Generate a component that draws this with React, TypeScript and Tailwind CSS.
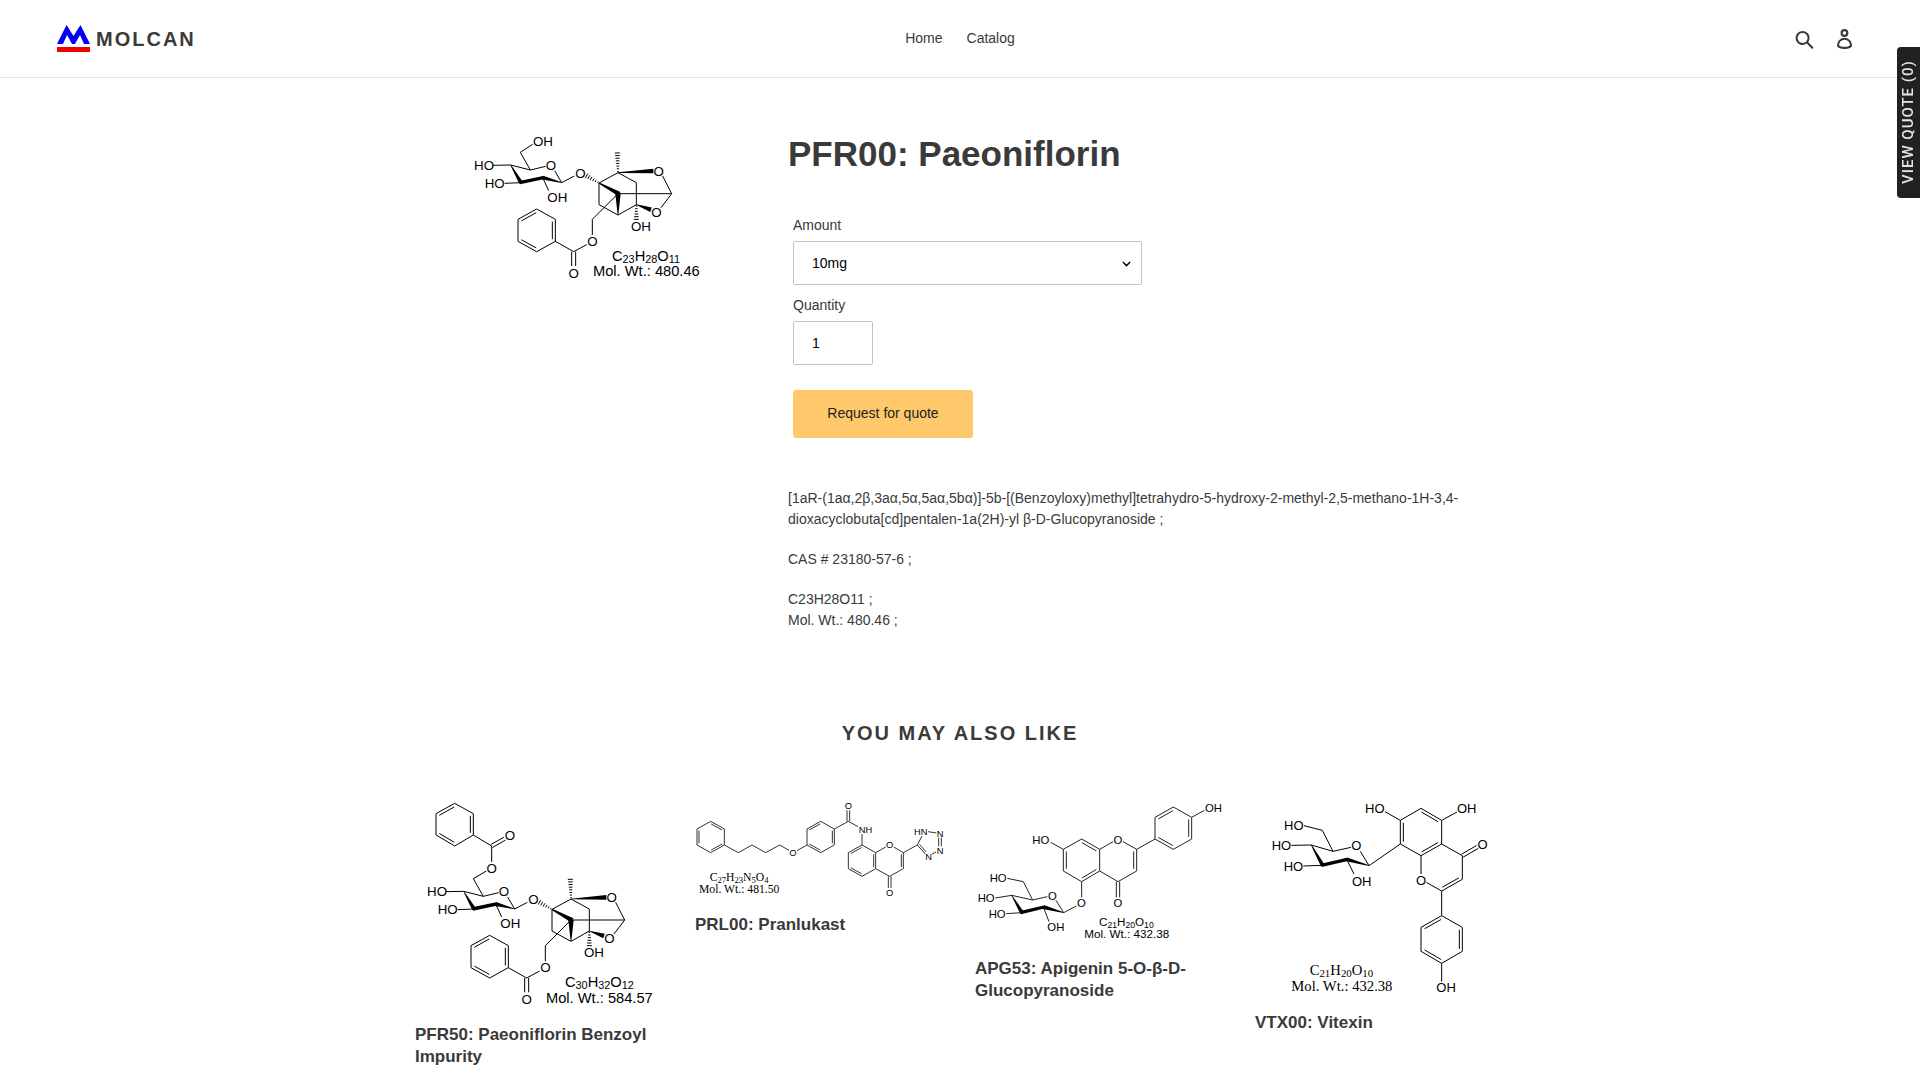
import React from "react";

type Pt = [number, number];
type LabelData = [x: number, y: number, text: string, centered?: boolean];

const points = (list: Pt[]) => list.map((p) => p.join(",")).join(" ");

/** Closed ring with inner double-bond strokes on the chosen edges. */
function Ring({ at, doubles, gap = 9 }: { at: Pt[]; doubles: number[]; gap?: number }) {
  const cx = at.reduce((s, p) => s + p[0], 0) / at.length;
  const cy = at.reduce((s, p) => s + p[1], 0) / at.length;
  return (
    <>
      <polygon points={points(at)} />
      {doubles.map((i) => (
        <InnerBond key={i} a={at[i]} b={at[(i + 1) % at.length]} to={[cx, cy]} gap={gap} />
      ))}
    </>
  );
}

/** Second stroke of a double bond, shifted towards the point `to`. */
function InnerBond({ a, b, to, gap = 9 }: { a: Pt; b: Pt; to: Pt; gap?: number }) {
  const dx = b[0] - a[0];
  const dy = b[1] - a[1];
  const len = Math.hypot(dx, dy);
  let nx = -dy / len;
  let ny = dx / len;
  if (nx * (to[0] - a[0]) + ny * (to[1] - a[1]) < 0) {
    nx = -nx;
    ny = -ny;
  }
  return (
    <line
      x1={a[0] + dx * 0.1 + nx * gap}
      y1={a[1] + dy * 0.1 + ny * gap}
      x2={b[0] - dx * 0.1 + nx * gap}
      y2={b[1] - dy * 0.1 + ny * gap}
    />
  );
}

/** Two parallel strokes either side of the axis a-b. */
function Double({ a, b, gap = 5 }: { a: Pt; b: Pt; gap?: number }) {
  const len = Math.hypot(b[0] - a[0], b[1] - a[1]);
  const nx = (-(b[1] - a[1]) / len) * gap;
  const ny = ((b[0] - a[0]) / len) * gap;
  return (
    <path
      d={`M${a[0] + nx},${a[1] + ny}L${b[0] + nx},${b[1] + ny}M${a[0] - nx},${a[1] - ny}L${b[0] - nx},${b[1] - ny}`}
    />
  );
}

/** Solid wedge from the narrow end a to the wide end b. */
function Wedge({ a, b, from = 1, to = 6 }: { a: Pt; b: Pt; from?: number; to?: number }) {
  const len = Math.hypot(b[0] - a[0], b[1] - a[1]);
  const nx = -(b[1] - a[1]) / len;
  const ny = (b[0] - a[0]) / len;
  return (
    <polygon
      fill="#000"
      stroke="none"
      points={points([
        [a[0] + nx * from, a[1] + ny * from],
        [b[0] + nx * to, b[1] + ny * to],
        [b[0] - nx * to, b[1] - ny * to],
        [a[0] - nx * from, a[1] - ny * from],
      ])}
    />
  );
}

/** Hashed wedge from the narrow end a to the wide end b. */
function Hash({ a, b, n = 7 }: { a: Pt; b: Pt; n?: number }) {
  const len = Math.hypot(b[0] - a[0], b[1] - a[1]);
  const nx = -(b[1] - a[1]) / len;
  const ny = (b[0] - a[0]) / len;
  const d = Array.from({ length: n }, (_, i) => {
    const t = (i + 0.5) / n;
    const w = 2 + 6 * t;
    const x = a[0] + (b[0] - a[0]) * t;
    const y = a[1] + (b[1] - a[1]) * t;
    return `M${x + nx * w},${y + ny * w}L${x - nx * w},${y - ny * w}`;
  }).join("");
  return <path d={d} />;
}

function Labels({ items, size }: { items: LabelData[]; size: number }) {
  return (
    <g fill="#000" stroke="none" fontSize={size} fontFamily='"Liberation Sans", sans-serif'>
      {items.map(([x, y, text, centered], i) => (
        <text key={i} x={x} y={y} textAnchor={centered ? "middle" : "start"}>
          {text}
        </text>
      ))}
    </g>
  );
}

function Formula({
  parts,
  weight,
  at,
  weightAt,
  size,
  serif,
}: {
  parts: string[];
  weight: string;
  at: Pt;
  weightAt: Pt;
  size: number;
  serif?: boolean;
}) {
  return (
    <g
      fill="#000"
      stroke="none"
      fontSize={size}
      fontFamily={serif ? '"Liberation Serif", serif' : '"Liberation Sans", sans-serif'}
    >
      <text x={at[0]} y={at[1]}>
        {parts.map((p, i) =>
          /\d/.test(p) ? (
            <tspan key={i} fontSize={size * 0.74} baselineShift="-6">
              {p}
            </tspan>
          ) : (
            <tspan key={i}>{p}</tspan>
          ),
        )}
      </text>
      <text x={weightAt[0]} y={weightAt[1]}>
        Mol. Wt.: {weight}
      </text>
    </g>
  );
}

function Drawing({
  box,
  title,
  className,
  ink = "#000",
  children,
}: {
  box: string;
  title: string;
  className: string;
  ink?: string;
  children: React.ReactNode;
}) {
  return (
    <svg
      viewBox={box}
      role="img"
      aria-label={title}
      className={className}
      fill="none"
      stroke={ink}
      strokeWidth="3"
      strokeLinejoin="round"
    >
      {children}
    </svg>
  );
}

function PaeoniflorinCore() {
  return (
    <>
      <path d="M181,97L211,150M98,136L152,135L211,150L257,139M284,152L305,188L343,168M134,190L182,188M248,173L266,212" />
      <Wedge a={[152, 135]} b={[183, 188]} />
      <Wedge a={[179, 188]} b={[250, 173]} from={5} to={5} />
      <Wedge a={[305, 188]} b={[248, 173]} />
      <Hash a={[417, 189]} b={[376, 166]} n={6} />
      <path d="M417,189L474,158L529,188V254L474,285L417,254V189M474,221H635M608,168L635,221L603,263M474,221L397,298V345M380,374L341,395L286,364" />
      <Hash a={[474, 158]} b={[472, 95]} n={8} />
      <Wedge a={[474, 158]} b={[580, 153]} to={7} />
      <Wedge a={[417, 189]} b={[478, 222]} from={2} to={7} />
      <Wedge a={[474, 285]} b={[474, 221]} to={8} />
      <Wedge a={[529, 254]} b={[573, 269]} to={7} />
      <Hash a={[529, 254]} b={[529, 302]} n={6} />
      <Double a={[341, 395]} b={[341, 438]} gap={6} />
      <Ring at={[[230, 267], [286, 298], [286, 364], [230, 395], [174, 364], [174, 298]]} doubles={[1, 3, 5]} />
      <Labels
        size={40}
        items={[
          [42, 150, "HO"],
          [273, 150, "O", true],
          [74, 204, "HO"],
          [262, 246, "OH"],
          [361, 174, "O", true],
          [596, 167, "O", true],
          [589, 291, "O", true],
          [513, 333, "OH"],
          [397, 378, "O", true],
          [341, 473, "O", true],
        ]}
      />
    </>
  );
}

function Paeoniflorin({ className }: { className: string }) {
  return (
    <Drawing box="-9 0 780 510" title="Structure of Paeoniflorin" className={className}>
      <path d="M218,73L181,97" />
      <PaeoniflorinCore />
      <Labels size={40} items={[[219, 79, "OH"]]} />
      <Formula parts={["C", "23", "H", "28", "O", "11"]} weight="480.46" at={[456, 422]} weightAt={[399, 467]} size={44} />
    </Drawing>
  );
}

function PaeoniflorinBenzoyl() {
  return (
    <Drawing box="15 21 750 639" title="Structure of Paeoniflorin Benzoyl Impurity" className="w-full">
      <g transform="translate(9 169)">
        <PaeoniflorinCore />
      </g>
      <path d="M190,266L229,243M245,216V168L190,135" />
      <Double a={[245, 168]} b={[284, 146]} />
      <Ring at={[[134, 40], [190, 71], [190, 135], [134, 168], [78, 135], [78, 71]]} doubles={[1, 3, 5]} />
      <Labels size={40} items={[[245, 248, "O", true], [300, 151, "O", true]]} />
      <Formula parts={["C", "30", "H", "32", "O", "12"]} weight="584.57" at={[465, 592]} weightAt={[408, 639]} size={44} />
    </Drawing>
  );
}

function Pranlukast() {
  return (
    <Drawing box="30 21 750 309" title="Structure of Pranlukast" className="w-full" ink="#333">
      <Ring at={[[77, 94], [118, 117], [118, 165], [77, 188], [36, 165], [36, 117]]} doubles={[0, 2, 4]} gap={6} />
      <path d="M118,165L160,188L201,165L242,188L284,165L312,181M336,182L366,165M448,117L490,94L519,110M531,132V165" />
      <Ring at={[[366, 165], [366, 117], [407, 94], [448, 117], [448, 165], [407, 188]]} doubles={[1, 3, 5]} gap={6} />
      <Double a={[490, 94]} b={[490, 61]} gap={4} />
      <Ring at={[[531, 165], [572, 188], [572, 236], [531, 259], [490, 236], [490, 188]]} doubles={[1, 3, 5]} gap={6} />
      <path d="M572,188L602,171M626,171L655,188V236L614,259L572,236M655,188L697,165L711,138M729,125L754,129M753,186L741,192M721,192L697,165" />
      <InnerBond a={[655, 188]} b={[655, 236]} to={[614, 212]} gap={6} />
      <InnerBond a={[697, 165]} b={[721, 192]} to={[740, 160]} gap={6} />
      <Double a={[765, 143]} b={[765, 169]} gap={4} />
      <Double a={[614, 259]} b={[614, 294]} gap={4} />
      <Labels
        size={28}
        items={[
          [490, 57, "O", true],
          [324, 199, "O", true],
          [521, 129, "NH"],
          [614, 175, "O", true],
          [614, 319, "O", true],
          [687, 134, "HN"],
          [765, 140, "N", true],
          [765, 192, "N", true],
          [731, 210, "N", true],
        ]}
      />
      <Formula serif parts={["C", "27", "H", "23", "N", "5", "O", "4"]} weight="481.50" at={[74, 274]} weightAt={[42, 308]} size={35} />
    </Drawing>
  );
}

function Apigenin() {
  return (
    <Drawing box="30 21 750 441" title="Structure of Apigenin 5-O-β-D-Glucopyranoside" className="w-full" ink="#222">
      <Ring at={[[625, 51], [680, 82], [680, 147], [625, 178], [570, 147], [570, 82]]} doubles={[1, 3, 5]} />
      <path d="M680,82L718,61M570,147L515,178V243L459,275L404,243M404,178L444,155M474,155L515,178M295,178L257,157M350,275V322M334,348L296,368" />
      <InnerBond a={[515, 178]} b={[515, 243]} to={[459, 210]} />
      <Double a={[459, 275]} b={[459, 322]} />
      <Ring at={[[404, 178], [350, 147], [295, 178], [295, 243], [350, 275], [404, 243]]} doubles={[0, 2, 4]} />
      <path d="M127,265L175,275L203,330M91,324L140,316L203,330L247,320M273,331L296,368M124,371L170,368M235,351L252,395" />
      <Wedge a={[140, 316]} b={[171, 368]} />
      <Wedge a={[167, 368]} b={[237, 351]} from={5} to={5} />
      <Wedge a={[296, 368]} b={[235, 351]} />
      <Labels
        size={34}
        items={[
          [720, 66, "OH"],
          [459, 161, "O", true],
          [459, 352, "O", true],
          [202, 161, "HO"],
          [349, 352, "O", true],
          [74, 276, "HO"],
          [262, 331, "O", true],
          [38, 336, "HO"],
          [71, 383, "HO"],
          [247, 424, "OH"],
        ]}
      />
      <Formula parts={["C", "21", "H", "20", "O", "10"]} weight="432.38" at={[402, 407]} weightAt={[358, 444]} size={35} />
    </Drawing>
  );
}

function Vitexin() {
  return (
    <Drawing box="30 21 750 603" title="Structure of Vitexin" className="w-full">
      <Ring at={[[466, 91], [528, 55], [590, 91], [590, 162], [528, 197], [466, 162]]} doubles={[1, 3, 5]} />
      <path d="M420,65L466,91M590,91L636,66M590,162L652,197V268L590,303L544,277M528,252V197M590,303V377M590,520V575M466,162L372,227" />
      <Double a={[652, 197]} b={[697, 171]} />
      <InnerBond a={[652, 268]} b={[590, 303]} to={[590, 230]} />
      <Ring at={[[590, 377], [652, 412], [652, 484], [590, 520], [528, 484], [528, 412]]} doubles={[1, 3, 5]} />
      <path d="M177,107L232,121L264,184M139,166L199,165L264,184L318,172M346,184L372,227M175,228L232,226M305,208L327,252" />
      <Wedge a={[199, 165]} b={[233, 226]} />
      <Wedge a={[229, 226]} b={[307, 208]} from={5} to={5} />
      <Wedge a={[372, 227]} b={[305, 208]} />
      <Labels
        size={39}
        items={[
          [360, 69, "HO"],
          [636, 69, "OH"],
          [713, 178, "O", true],
          [528, 286, "O", true],
          [574, 607, "OH"],
          [117, 119, "HO"],
          [334, 181, "O", true],
          [80, 181, "HO"],
          [116, 242, "HO"],
          [321, 287, "OH"],
        ]}
      />
      <Formula serif parts={["C", "21", "H", "20", "O", "10"]} weight="432.38" at={[194, 556]} weightAt={[139, 603]} size={44} />
    </Drawing>
  );
}

const related = [
  { name: "PFR50: Paeoniflorin Benzoyl Impurity", art: <PaeoniflorinBenzoyl /> },
  { name: "PRL00: Pranlukast", art: <Pranlukast /> },
  { name: "APG53: Apigenin 5-O-β-D-Glucopyranoside", art: <Apigenin /> },
  { name: "VTX00: Vitexin", art: <Vitexin /> },
];

function Header() {
  return (
    <header className="grid h-[78px] grid-cols-3 items-center border-b border-[#e2e3e4] px-14">
      <a href="#" aria-label="Molcan" className="flex items-center gap-1.5">
        <svg viewBox="-1 0 34 28" className="h-7 w-[34px]" aria-hidden="true">
          <path d="M0,19L9.500,0L16.500,11L23.500,0L33,19H27L23,10L18,19H15L10,10L6,19Z" fill="#0000f5" />
          <rect x="0" y="22" width="33" height="5" fill="#f50000" />
        </svg>
        <span className="text-xl font-bold tracking-[2px]">MOLCAN</span>
      </a>
      <nav className="flex justify-center gap-6">
        <a href="#">Home</a>
        <a href="#">Catalog</a>
      </nav>
      <div className="flex items-center justify-end gap-[22px] pr-3">
        <button type="button" aria-label="Search" className="p-px">
          <svg viewBox="0 0 37 40" className="h-5 w-[19px]" aria-hidden="true">
            <path
              d="M35.6 36l-9.8-9.8c4.1-5.4 3.6-13.2-1.3-18.1-5.4-5.4-14.2-5.4-19.7 0-5.4 5.4-5.4 14.2 0 19.7 2.6 2.6 6.1 4.1 9.8 4.1 3 0 5.9-1 8.3-2.8l9.8 9.8c.4.4.9.6 1.4.6s1-.2 1.4-.6c.9-.9.9-2.1.1-2.9zm-20.9-8.2c-2.6 0-5.1-1-7-2.9-3.9-3.9-3.9-10.1 0-14C9.6 9 12.2 8 14.7 8s5.1 1 7 2.9c3.9 3.9 3.9 10.1 0 14-1.9 1.9-4.4 2.9-7 2.9z"
              fill="#3a3a3a"
            />
          </svg>
        </button>
        <a href="#" aria-label="Log in">
          <svg viewBox="0 0 28.33 37.68" className="h-5 w-[15px]" aria-hidden="true">
            <path
              d="M14.17 14.9a7.45 7.45 0 1 0-7.5-7.45 7.46 7.46 0 0 0 7.5 7.45zm0-10.91a3.45 3.45 0 1 1-3.5 3.46A3.46 3.46 0 0 1 14.17 4zM14.17 16.47A14.18 14.18 0 0 0 0 30.68c0 1.41.66 4 5.11 5.66a27.17 27.17 0 0 0 9.06 1.34c6.54 0 14.17-1.84 14.17-7a14.18 14.18 0 0 0-14.17-14.21zm0 17.21c-6.3 0-10.17-1.77-10.17-3a10.17 10.17 0 1 1 20.33 0c.01 1.23-3.86 3-10.16 3z"
              fill="#3a3a3a"
            />
          </svg>
        </a>
      </div>
    </header>
  );
}

function ProductForm() {
  return (
    <form className="mt-10 flex flex-col items-start pl-[5px]" onSubmit={(e) => e.preventDefault()}>
      <label htmlFor="amount" className="mb-[5px]">
        Amount
      </label>
      <div className="relative w-full max-w-[349px]">
        <select
          id="amount"
          className="h-11 w-full appearance-none rounded-xs border border-[#c4c4c4] bg-white px-[18px] text-black"
        >
          <option>10mg</option>
          <option>25mg</option>
          <option>50mg</option>
          <option>100mg</option>
        </select>
        <svg
          viewBox="0 0 10 6"
          className="pointer-events-none absolute top-5 right-[11px] h-[6px] w-[9px]"
          fill="none"
          stroke="#000"
          strokeWidth="1.6"
          aria-hidden="true"
        >
          <path d="M1 .8l4 4 4-4" />
        </svg>
      </div>
      <label htmlFor="quantity" className="mt-[10px] mb-[5px]">
        Quantity
      </label>
      <input
        id="quantity"
        type="text"
        inputMode="numeric"
        defaultValue="1"
        className="h-11 w-20 rounded-xs border border-[#c4c4c4] px-[18px] text-black"
      />
      <button type="submit" className="mt-[25px] h-12 w-[180px] rounded-[3px] bg-[#ffc86b] pb-0.5 text-[#222]">
        Request for quote
      </button>
    </form>
  );
}

export default function App() {
  return (
    <div className="bg-white font-['Liberation_Sans',Arial,sans-serif] text-sm leading-[21px] text-[#3a3a3a]">
      <Header />
      <main className="mx-auto max-w-[1200px] px-[55px]">
        <section className="grid grid-cols-[343fr_717fr] gap-[30px] pt-[42px]">
          <div className="flex justify-center">
            <Paeoniflorin className="h-[170px] w-[260px]" />
          </div>
          <div>
            <h1 className="mt-[13px] text-[35px] leading-[42px] font-bold">PFR00: Paeoniflorin</h1>
            <ProductForm />
            <div className="mt-[50px] flex flex-col gap-[19px]">
              <p>
                [1aR-(1aα,2β,3aα,5α,5aα,5bα)]-5b-[(Benzoyloxy)methyl]tetrahydro-5-hydroxy-2-methyl-2,5-methano-1H-3,4-
                dioxacyclobuta[cd]pentalen-1a(2H)-yl β-D-Glucopyranoside ;
              </p>
              <p>CAS # 23180-57-6 ;</p>
              <p>
                C23H28O11 ;<br />
                Mol. Wt.: 480.46 ;
              </p>
            </div>
          </div>
        </section>
        <section className="pt-[90px]">
          <h2 className="text-center text-xl leading-6 font-bold tracking-[2px]">YOU MAY ALSO LIKE</h2>
          <ul className="mt-[52px] grid grid-cols-4 gap-[30px]">
            {related.map((item) => (
              <li key={item.name}>
                <a href="#" className="flex flex-col gap-[14px]">
                  {item.art}
                  <span className="text-[17px] leading-[22px] font-bold">{item.name}</span>
                </a>
              </li>
            ))}
          </ul>
        </section>
      </main>
      <button
        type="button"
        className="fixed top-[47px] right-0 flex h-[151px] w-[23px] rotate-180 items-center justify-center rounded-r-[4px] bg-[#1f2123] font-[Roboto,sans-serif] text-[15px] font-medium tracking-[1px] text-[#e4e4e4] [writing-mode:vertical-rl]"
      >
        VIEW QUOTE (0)
      </button>
    </div>
  );
}
